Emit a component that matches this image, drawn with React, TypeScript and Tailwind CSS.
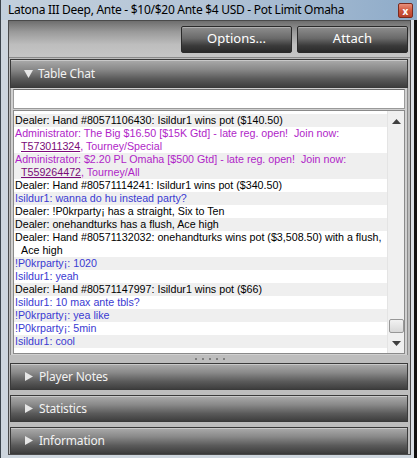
import React from "react";

const CHAT = "font-['Liberation_Sans',Arial,sans-serif] text-[10.7px] leading-[13px]";
const UI = "font-['Noto_Sans','Open_Sans',sans-serif]";

const dealer = "text-black";
const admin = "text-[#b01ec8]";
const link = "text-[#7a0a78] underline";
const player = "text-[#3a3ad2]";

function Row({ i, children, cls }: { i: number; children: React.ReactNode; cls: string }) {
  return (
    <div
      className={`pl-[7px] -indent-[6px] whitespace-pre-wrap ${cls} ${i % 2 === 0 ? "bg-[#efefef]" : "bg-white"}`}
    >
      {children}
    </div>
  );
}

function SectionHeader({ label, open, h }: { label: string; open?: boolean; h: string }) {
  return (
    <div
      className={`${h} flex items-center border border-[#3a3a3a] shadow-[inset_0_1px_0_#c8c8c8] bg-[linear-gradient(to_bottom,#ababab_0%,#898989_35%,#5a5a5a_70%,#3e3e3e_100%)]`}
    >
      {open ? (
        <svg width="9" height="8" viewBox="0 0 9 8" className="ml-[13px]">
          <path d="M0 0 L9 0 L4.5 8 Z" fill="#e6e6e6" />
        </svg>
      ) : (
        <svg width="8" height="9" viewBox="0 0 8 9" className="ml-[14px]">
          <path d="M0 0 L8 4.5 L0 9 Z" fill="#e6e6e6" />
        </svg>
      )}
      <span className={`${UI} ${open ? "ml-[5px]" : "ml-[6px]"} text-[12px] tracking-[-0.2px] text-[#f2f2f2]`}>
        {label}
      </span>
    </div>
  );
}

function ToolButton({ label }: { label: string }) {
  return (
    <div
      className={`${UI} w-[111px] h-[27px] flex items-center justify-center rounded-[2px] border border-[#2a2a2a] shadow-[inset_0_1px_0_#b0b0b0] bg-[linear-gradient(to_bottom,#8e8e8e_0%,#6a6a6a_45%,#3a3a3a_75%,#2a2a2a_100%)] text-white text-[13px]`}
    >
      {label}
    </div>
  );
}

export default function App() {
  const rows: { cls: string; body: React.ReactNode }[] = [
    { cls: dealer, body: "Dealer: Hand #80571106430: Isildur1 wins pot ($140.50)" },
    {
      cls: admin,
      body: (
        <>
          {"Administrator: The Big $16.50 [$15K Gtd] - late reg. open!  Join now:"}
          <br />
          <span className={link}>T573011324</span>, Tourney/Special
        </>
      ),
    },
    {
      cls: admin,
      body: (
        <>
          {"Administrator: $2.20 PL Omaha [$500 Gtd] - late reg. open!  Join now:"}
          <br />
          <span className={link}>T559264472</span>, Tourney/All
        </>
      ),
    },
    { cls: dealer, body: "Dealer: Hand #80571114241: Isildur1 wins pot ($340.50)" },
    { cls: player, body: "Isildur1: wanna do hu instead party?" },
    { cls: dealer, body: "Dealer: !P0krparty¡ has a straight, Six to Ten" },
    { cls: dealer, body: "Dealer: onehandturks has a flush, Ace high" },
    {
      cls: dealer,
      body: (
        <>
          Dealer: Hand #80571132032: onehandturks wins pot ($3,508.50) with a flush,
          <br />
          Ace high
        </>
      ),
    },
    { cls: player, body: "!P0krparty¡: 1020" },
    { cls: player, body: "Isildur1: yeah" },
    { cls: dealer, body: "Dealer: Hand #80571147997: Isildur1 wins pot ($66)" },
    { cls: player, body: "Isildur1: 10 max ante tbls?" },
    { cls: player, body: "!P0krparty¡: yea like" },
    { cls: player, body: "!P0krparty¡: 5min" },
    { cls: player, body: "Isildur1: cool" },
  ];

  return (
    <div className="w-[417px] h-[458px] flex flex-col bg-[#cdd5dd] border-l-[1px] border-[#3c444c] overflow-hidden">
      {/* Title bar */}
      <div className="h-[21px] flex items-center bg-[linear-gradient(to_right,#c3d0dd_0%,#b3c4d6_50%,#8eabc9_100%)]">
        <span className={`${UI} ml-[7px] text-[12px] text-black tracking-[-0.28px]`}>
          Latona III Deep, Ante - $10/$20 Ante $4 USD - Pot Limit Omaha
        </span>
        <div className="ml-auto mr-[4px] mt-[1px] w-[15px] h-[15px] rounded-[2px] border border-[#7a2a1e] bg-[linear-gradient(to_bottom,#e8907c_0%,#d0583e_50%,#b8402a_100%)] flex items-center justify-center">
          <span className="text-white text-[10px] font-bold leading-none">x</span>
        </div>
      </div>

      {/* Body */}
      <div className="flex-1 flex">
        <div className="ml-[7px] w-[403px] mb-[3px] border border-[#4a4a4a] bg-[#bdbdbd] flex flex-col">
          {/* Toolbar */}
          <div className="h-[37px] flex items-center justify-end gap-[5px] pr-[2px] bg-[linear-gradient(to_bottom,#6e6e6e_0%,#9a9a9a_30%,#bdbdbd_65%,#c6c6c6_100%)] border-b border-[#8a8a8a]">
            <ToolButton label="Options..." />
            <ToolButton label="Attach" />
          </div>

          {/* Table Chat */}
          <div className="mt-[1px] ml-[1px] mr-[2px] flex flex-col">
            <SectionHeader label="Table Chat" open h="h-[29px]" />
            <div className="bg-[#d0d0d0] border-x border-[#8a8a8a] px-[2px] pt-[1px] pb-[1px] flex flex-col gap-[1px]">
              <div className="h-[20px] bg-white border border-[#9a9a9a] border-t-[#707070]" />
              <div className="h-[244px] bg-white border border-[#8a8a8a] flex overflow-hidden">
                <div className={`flex-1 ${CHAT} pt-[3px] overflow-hidden`}>
                  {rows.map((r, i) => (
                    <Row key={i} i={i} cls={r.cls}>
                      {r.body}
                    </Row>
                  ))}
                </div>
                {/* Scrollbar */}
                <div className="w-[17px] bg-[#f0f0f0] border-l border-[#e4e4e4] flex flex-col items-center">
                  <svg width="9" height="5" viewBox="0 0 9 5" className="mt-[8px]">
                    <path d="M4.5 0 L9 5 L0 5 Z" fill="#404040" />
                  </svg>
                  <div className="flex-1" />
                  <div className="w-[15px] h-[14px] rounded-[2px] border border-[#979797] bg-[linear-gradient(to_bottom,#f2f2f2,#d8d8d8)]" />
                  <svg width="9" height="5" viewBox="0 0 9 5" className="mt-[8px] mb-[7px]">
                    <path d="M0 0 L9 0 L4.5 5 Z" fill="#404040" />
                  </svg>
                </div>
              </div>
            </div>
          </div>

          {/* Grip */}
          <div className="h-[8px] flex items-center justify-center gap-[5px]">
            {[0, 1, 2, 3, 4].map((d) => (
              <div key={d} className="w-[2px] h-[2px] bg-[#808080]" />
            ))}
          </div>

          <div className="ml-[1px] mr-[2px] flex flex-col gap-[5px]">
            <SectionHeader label="Player Notes" h="h-[27px]" />
            <SectionHeader label="Statistics" h="h-[27px]" />
            <SectionHeader label="Information" h="h-[27px]" />
          </div>
        </div>
        <div className="w-[3px] bg-[#d8dee4]" />
        <div className="flex-1 bg-[#111]" />
      </div>
    </div>
  );
}
